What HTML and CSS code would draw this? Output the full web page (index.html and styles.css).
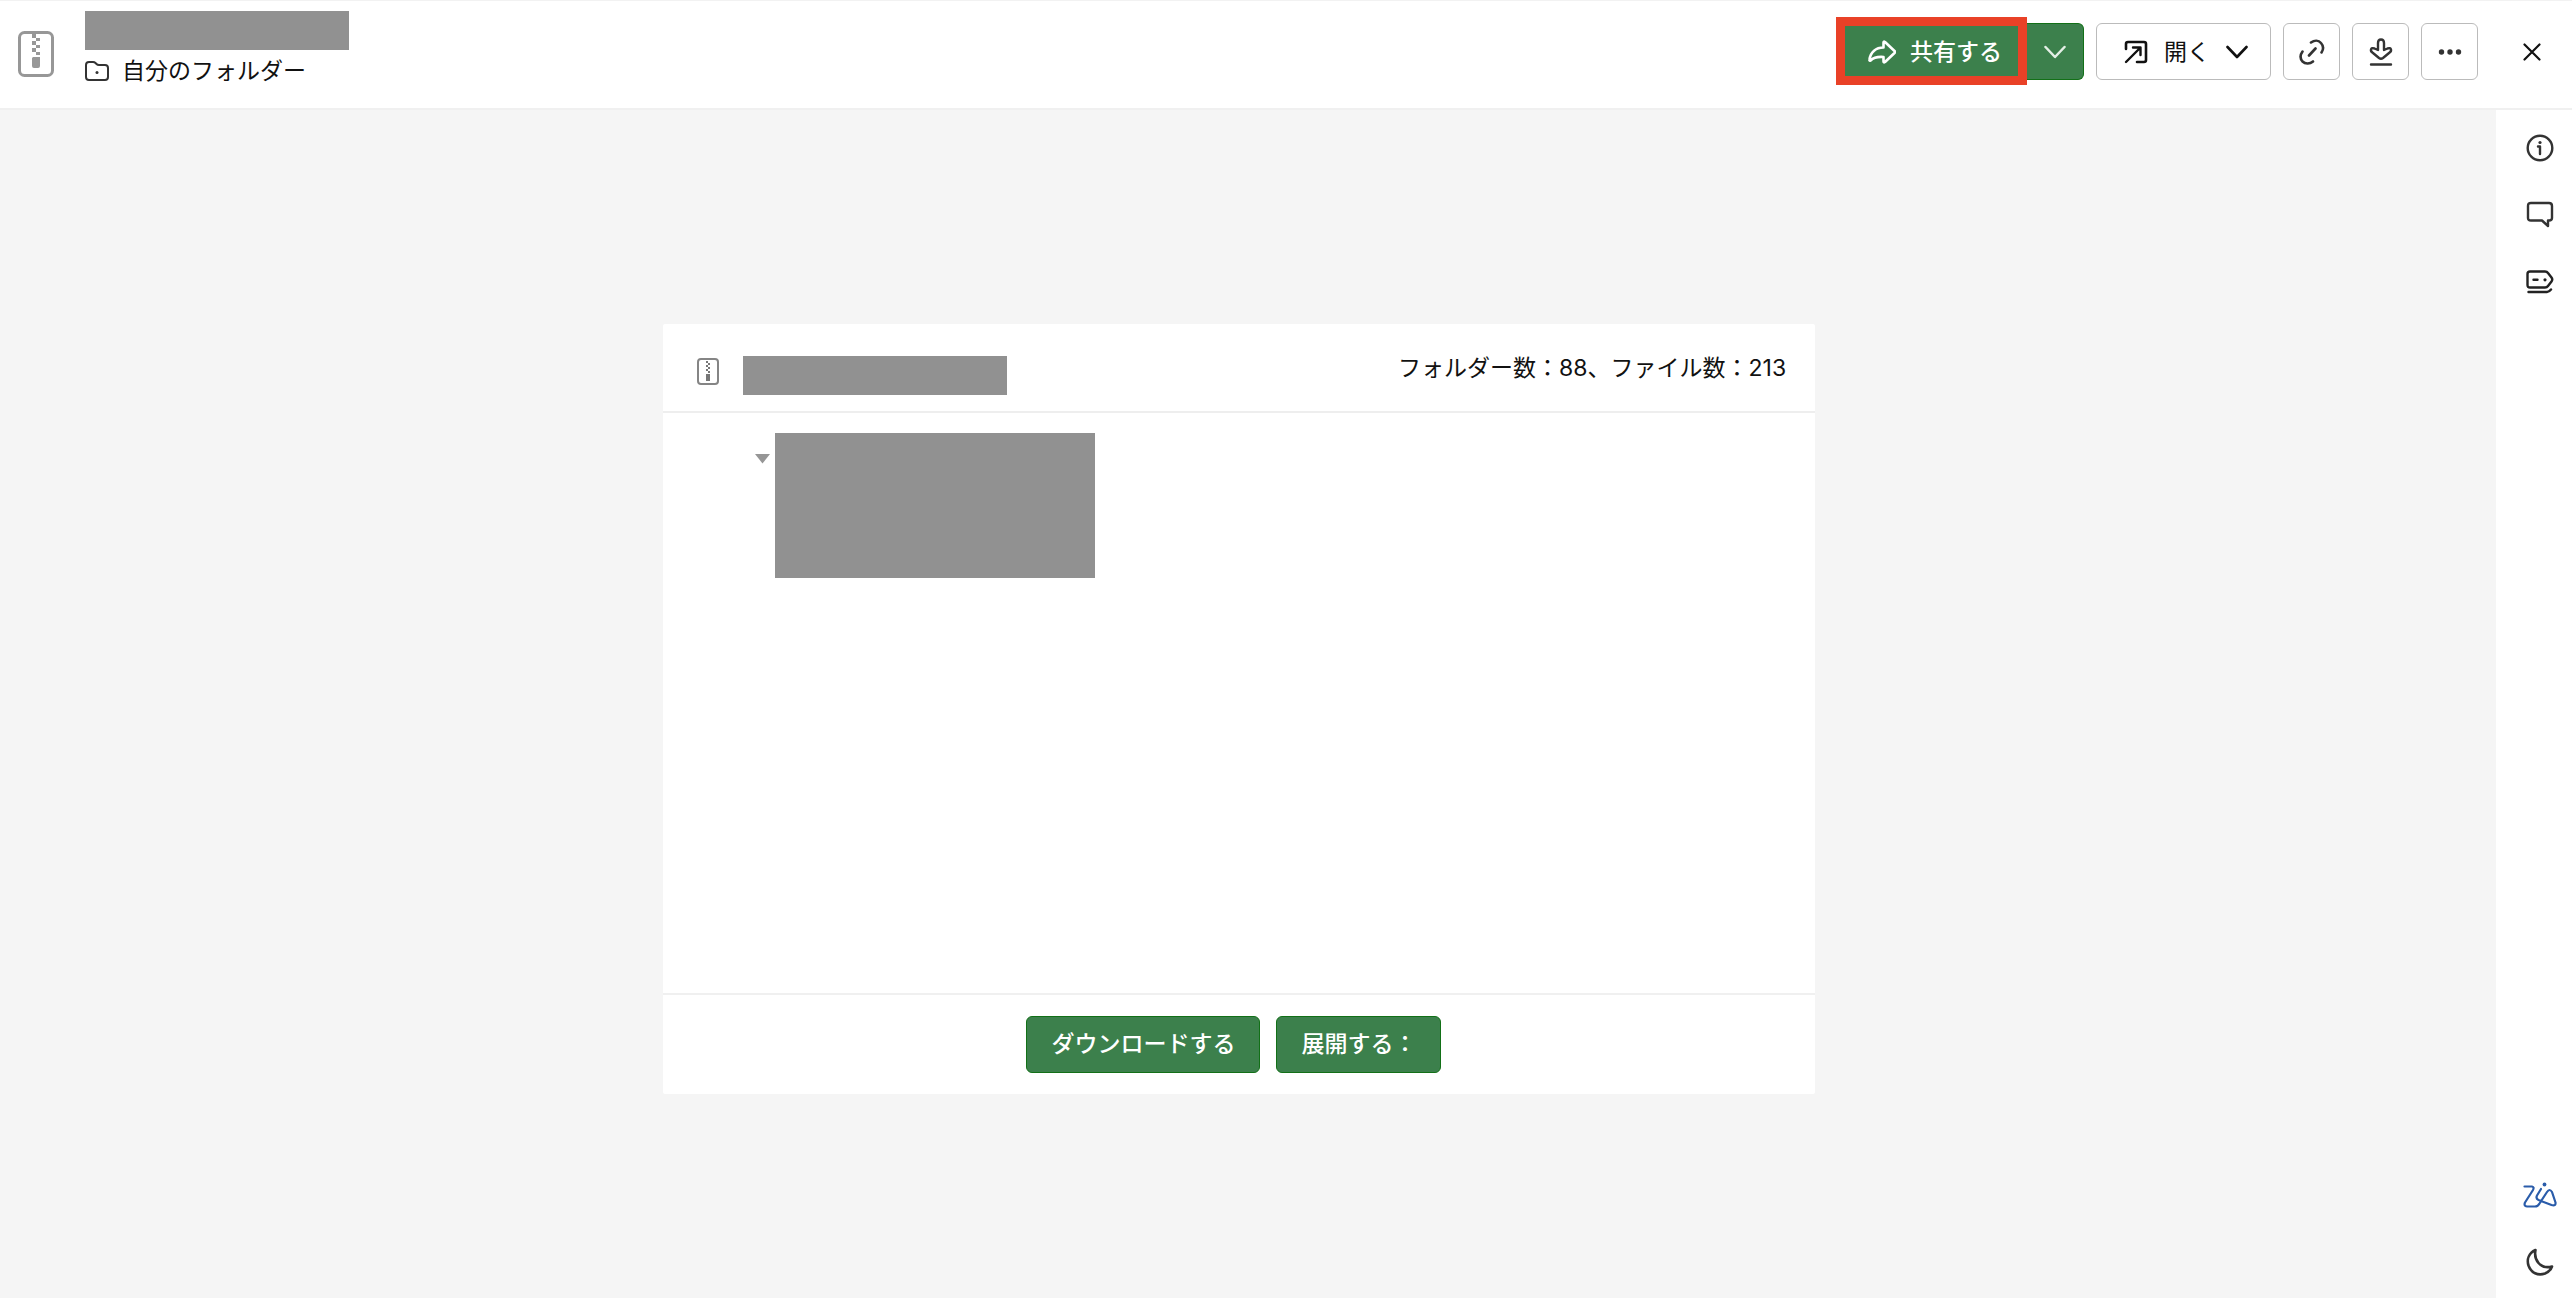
FILE: index.html
```html
<!DOCTYPE html>
<html lang="ja">
<head>
    <meta charset="UTF-8">
    <meta name="viewport" content="width=device-width, initial-scale=1.0">
    <title>自分のフォルダー</title>
    <link rel="stylesheet" href="styles.css">
</head>
<body>

    <header class="topbar">
        <svg class="file-icon" width="36" height="46" viewBox="0 0 36 46" fill="none">
            <rect x="1.5" y="1.5" width="33" height="43" rx="5" stroke="#979797" stroke-width="3"/>
            <path d="M14 3h4v4h-4zM18 7h4v3h-4zM14 10h4v4h-4zM18 14h4v3h-4zM14 17h4v4h-4zM18 21h4v3h-4zM15 26h7v9a2 2 0 0 1-2 2h-4a2 2 0 0 1-2-2v-8z" fill="#979797"/>
        </svg>
        <div class="file-info">
            <div class="mask mask-name"></div>
            <a class="folder-link" href="#">
                <svg width="24" height="20" viewBox="0 0 24 20" fill="none" stroke="#333" stroke-width="2">
                    <path d="M1 16V4q0-3 3-3h4q1.500 0 2.500 1l1 1q1 1 2.500 1H20q3 0 3 3v9q0 3-3 3H4q-3 0-3-3z"/>
                    <circle cx="12" cy="11.500" r="1.500" fill="#333" stroke="none"/>
                </svg>
                <span>自分のフォルダー</span>
            </a>
        </div>

        <div class="actions">
            <div class="share-group">
                <button class="btn btn-green btn-share" type="button">
                    <svg width="28" height="24" viewBox="0 0 28 24" fill="none" stroke="#fff" stroke-width="2.600" stroke-linejoin="round">
                        <path d="M15.500 2.500q0-1.500 1.500-.5l9.500 9q1 1 0 2l-9.500 9q-1.500 1-1.500-.5v-4.500C9 16.500 5.500 17.500 2.500 20.500 1.500 21 1.300 20.500 1.500 19.500 2.500 12 8 7.500 15.500 7.500z"/>
                    </svg>
                    共有する
                </button>
                <button class="btn btn-green btn-caret" type="button" aria-label="共有メニュー">
                    <svg width="22" height="14" viewBox="0 0 22 14" fill="none" stroke="#e4efe6" stroke-width="2.500" stroke-linecap="round" stroke-linejoin="round"><path d="M1.500 2 11 12 20.500 2"/></svg>
                </button>
            </div>
            <button class="btn btn-open" type="button">
                <svg width="24" height="24" viewBox="0 0 24 24" fill="none" stroke="#111" stroke-width="2.600" stroke-linecap="round" stroke-linejoin="round">
                    <path d="M2 9V4q0-2 2-2h16q2 0 2 2v16q0 2-2 2h-7"/>
                    <path d="M2 22 16.500 7.500M9 7.500h7.500V15" stroke-width="2.400"/>
                </svg>
                <span>開く</span>
                <svg class="open-caret" width="22" height="14" viewBox="0 0 22 14" fill="none" stroke="#111" stroke-width="2.600" stroke-linecap="round" stroke-linejoin="round"><path d="M1.500 2 11 12 20.500 2"/></svg>
            </button>
            <button class="btn btn-icon" type="button" aria-label="リンク">
                <svg width="26" height="26" viewBox="0 0 26 26" fill="none" stroke="#333" stroke-width="2.600" stroke-linecap="round">
                    <path d="M12 3.500C15.500 1 19.500 1 22 4c2.500 2.800 2.500 6.500.5 9.500M3.500 12.500C1 16 1 19.500 3.500 22.500 6.500 25.500 11 25 14 22.500M10 16.500l6.500-7"/>
                </svg>
            </button>
            <button class="btn btn-icon" type="button" aria-label="ダウンロード">
                <svg width="24" height="28" viewBox="0 0 24 28" fill="none" stroke="#333" stroke-width="2.400" stroke-linecap="round" stroke-linejoin="round">
                    <path d="M9 12V5q0-3.500 3-3.500t3 3.500v7l3.500-1.500q3-1 3.500 1t-2 3.500l-6 5q-2 1.500-4 0l-6-5q-2.500-1.500-2-3.500t3.500-1zM2 26.500h20"/>
                </svg>
            </button>
            <button class="btn btn-icon" type="button" aria-label="その他">
                <svg width="24" height="6" viewBox="0 0 24 6" fill="#333"><circle cx="3.500" cy="3" r="2.700"/><circle cx="12" cy="3" r="2.700"/><circle cx="20.500" cy="3" r="2.700"/></svg>
            </button>
            <button class="btn-close" type="button" aria-label="閉じる">
                <svg width="18" height="18" viewBox="0 0 18 18" fill="none" stroke="#111" stroke-width="2.200" stroke-linecap="round"><path d="M1.500 1.500l15 15M16.500 1.500l-15 15"/></svg>
            </button>
        </div>
    </header>

    <div class="content">
        <main class="preview">
            <section class="card">
                <div class="card-header">
                    <svg class="card-icon" width="22" height="28" viewBox="0 0 22 28" fill="none">
                        <rect x="1" y="1" width="20" height="25" rx="3" stroke="#858585" stroke-width="2"/>
                        <path d="M9 3h2v2H9zM11 5h2v2h-2zM9 7h2v2H9zM11 9h2v2h-2zM9 11h2v2H9zM11 13h2v2h-2zM9 16h4v7H9z" fill="#777"/>
                    </svg>
                    <div class="mask mask-name"></div>
                    <p class="counts">フォルダー数：88、ファイル数：213</p>
                </div>
                <div class="card-body">
                    <button class="tree-toggle" type="button" aria-label="折りたたむ">
                        <svg width="16" height="10" viewBox="0 0 16 10" fill="#969696"><path d="M0 0h15L7.500 9.500z"/></svg>
                    </button>
                    <div class="mask mask-tree"></div>
                </div>
                <div class="card-footer">
                    <button class="btn btn-green" type="button">ダウンロードする</button>
                    <button class="btn btn-green" type="button">展開する：</button>
                </div>
            </section>
        </main>

        <aside class="sidebar">
            <button class="side-btn" type="button" aria-label="詳細">
                <svg width="28" height="28" viewBox="0 0 28 28" fill="none" stroke="#333" stroke-width="2.400">
                    <circle cx="14" cy="14" r="12.300"/>
                    <path d="M12 12.500h2V20" stroke-linecap="round" stroke-linejoin="round"/>
                    <circle cx="14" cy="8.500" r="1.600" fill="#333" stroke="none"/>
                </svg>
            </button>
            <button class="side-btn" type="button" aria-label="コメント">
                <svg width="28" height="28" viewBox="0 0 28 28" fill="none" stroke="#333" stroke-width="2.400" stroke-linejoin="round">
                    <path d="M5 2h18q3 0 3 3v12q0 2.500-3 2.500h-1V25l-6-5.500H5q-3 0-3-2.500V5q0-3 3-3z"/>
                </svg>
            </button>
            <button class="side-btn" type="button" aria-label="ラベル">
                <svg width="28" height="28" viewBox="0 0 28 28" fill="none" stroke="#222" stroke-width="2.400" stroke-linecap="round" stroke-linejoin="round">
                    <path d="M4 3.500h15q2 0 3 1.500l3.500 4.500q1.500 2 0 4L22 18q-1 1.500-3 1.500H4q-2.500 0-2.500-2.500V6q0-2.500 2.500-2.500zM2.500 24H21q2 0 4-2.500M7.500 11.800h4"/>
                    <circle cx="19" cy="11.800" r="1.600" fill="#222" stroke="none"/>
                </svg>
            </button>
            <button class="side-btn side-bottom" type="button" aria-label="Zia">
                <svg width="34" height="26" viewBox="0 0 34 26" fill="none" stroke="#2a5caa" stroke-width="2.200" stroke-linecap="round" stroke-linejoin="round">
                    <path d="M1.500 4.500H9q2.500.5 1 3.500L2 20.500q-1.500 3.500 2 4h8q3 0 4.500-3L24 10q2.500-4 5 0l3.500 10.500q.5 4-4 2.500L15.500 18q-3-1.500-1.500-4.500l4-6.500"/>
                    <circle cx="21.500" cy="2.500" r="1.900" fill="#2a5caa" stroke="none"/>
                </svg>
            </button>
            <button class="side-btn" type="button" aria-label="ダークモード">
                <svg width="28" height="28" viewBox="0 0 28 28" fill="none" stroke="#333" stroke-width="2.600" stroke-linejoin="round">
                    <path d="M9.500 2C3 5 .5 11 2.500 17.500 5 25 12 28 19 25.500 22.500 24 25 21.500 26 18.500 20 20 15.500 18.500 12.500 15 9.500 11.500 8.500 7 9.500 2z"/>
                </svg>
            </button>
        </aside>
    </div>

</body>
</html>
```
FILE: styles.css
```css
* {
    box-sizing: border-box;
}
body {
    margin: 0;
    height: 100vh;
    display: flex;
    flex-direction: column;
    background-color: #f5f5f5;
    color: #111;
    font-family: Inter, "Noto Sans CJK JP", sans-serif;
    font-size: 23px;
    line-height: 32px;
}
button {
    margin: 0;
    padding: 0;
    border: none;
    background: none;
    color: inherit;
    font: inherit;
    cursor: pointer;
}
svg {
    display: block;
    flex: none;
}
.mask {
    flex: none;
    background-color: #919191;
}
.mask-name {
    width: 264px;
    height: 39px;
}

/* top bar */
.topbar {
    flex: none;
    display: flex;
    align-items: flex-start;
    height: 110px;
    padding: 10px 20px 0 18px;
    background-color: #fff;
    border-top: 1px solid #f2f2f2;
    border-bottom: 2px solid #f0f0f0;
}
.file-icon {
    margin-top: 20px;
}
.file-info {
    margin-left: 31px;
}
.folder-link {
    display: flex;
    align-items: center;
    gap: 13px;
    margin-top: 5px;
    color: inherit;
    text-decoration: none;
}
.actions {
    display: flex;
    gap: 12px;
    margin: 12px 0 0 auto;
}
.btn {
    display: flex;
    align-items: center;
    justify-content: center;
    height: 57px;
    border: 1px solid #bbb;
    border-radius: 6px;
}
.btn-green {
    padding: 0 24px;
    border-color: #127017;
    background-color: #3c804c;
    color: #fff;
    font-weight: 500;
}
.share-group {
    display: flex;
}
.btn-share {
    position: relative;
    gap: 14px;
    padding-left: 26px;
    border-radius: 6px 0 0 6px;
}
/* red frame over the share button */
.btn-share::after {
    content: "";
    position: absolute;
    inset: -7px -1px -6px -6px;
    border: 9px solid #e94127;
}
.btn-caret {
    width: 57px;
    padding: 0;
    border-left: none;
    border-radius: 0 6px 6px 0;
}
.btn-open {
    padding: 0 22px 0 27px;
    gap: 16px;
}
.btn-icon {
    width: 57px;
}
.btn-close {
    width: 40px;
    height: 57px;
    margin-left: 22px;
    display: flex;
    align-items: center;
    justify-content: center;
}

/* preview area */
.content {
    flex: 1;
    display: flex;
    min-height: 0;
}
.preview {
    flex: 1;
    display: flex;
    align-items: center;
    justify-content: center;
    padding: 10px 18px 0 0;
}
.card {
    display: flex;
    flex-direction: column;
    width: 46.5%;
    height: 65.3%;
    background-color: #fff;
    border-radius: 2px;
}
.card-header {
    display: flex;
    align-items: flex-start;
    height: 89px;
    padding: 32px 29px 0 34px;
    border-bottom: 2px solid #eee;
}
.card-icon {
    margin: 2px 24px 0 0;
}
.counts {
    margin: -4px 0 0 auto;
}
.card-body {
    flex: 1;
    display: flex;
    align-items: flex-start;
    padding: 20px 92px;
}
.tree-toggle {
    margin: 21px 4px 0 0;
}
.mask-tree {
    width: 320px;
    height: 145px;
}
.card-footer {
    display: flex;
    justify-content: center;
    gap: 16px;
    padding: 21px 10px 21px 0;
    border-top: 2px solid #f0f0f0;
}

/* right sidebar */
.sidebar {
    display: flex;
    flex-direction: column;
    align-items: center;
    gap: 27px;
    width: 76px;
    padding: 18px 0 16px 12px;
    background-color: #fff;
}
.side-btn {
    display: flex;
    align-items: center;
    justify-content: center;
    width: 40px;
    height: 40px;
}
.side-bottom {
    margin-top: auto;
}
```
